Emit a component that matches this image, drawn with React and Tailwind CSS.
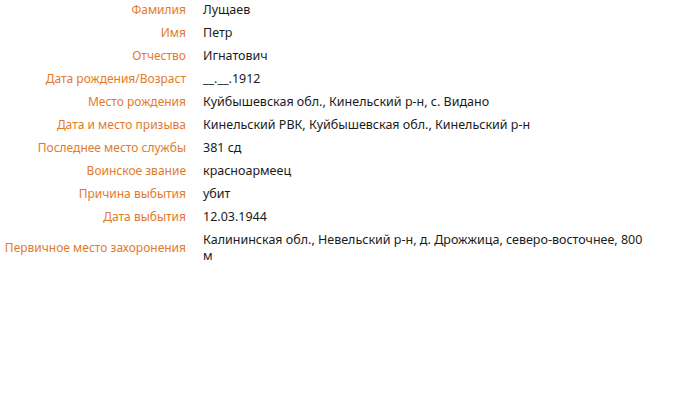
const rows = [
  ["Фамилия", "Лущаев"],
  ["Имя", "Петр"],
  ["Отчество", "Игнатович"],
  ["Дата рождения/Возраст", "__.__.1912"],
  ["Место рождения", "Куйбышевская обл., Кинельский р-н, с. Видано"],
  ["Дата и место призыва", "Кинельский РВК, Куйбышевская обл., Кинельский р-н"],
  ["Последнее место службы", "381 сд"],
  ["Воинское звание", "красноармеец"],
  ["Причина выбытия", "убит"],
  ["Дата выбытия", "12.03.1944"],
  ["Первичное место захоронения", "Калининская обл., Невельский р-н, д. Дрожжица, северо-восточнее, 800 м"],
];

export default function App() {
  return (
    <div className="w-[700px] h-[394px] bg-white font-['Noto_Sans',sans-serif] leading-[16px]">
      <table className="table-fixed w-[653px] -mt-[1.5px] border-collapse">
        <colgroup>
          <col className="w-[186px]" />
          <col />
        </colgroup>
        <tbody>
          {rows.map(([label, value]) => (
            <tr key={label}>
              <td className="text-right align-middle text-[12px] text-[#e27a2c] py-[3.5px] whitespace-nowrap">
                {label}
              </td>
              <td className="pl-[17px] py-[3.5px] align-middle text-[12.5px] text-[#1b1b1b]">{value}</td>
            </tr>
          ))}
        </tbody>
      </table>
    </div>
  );
}
